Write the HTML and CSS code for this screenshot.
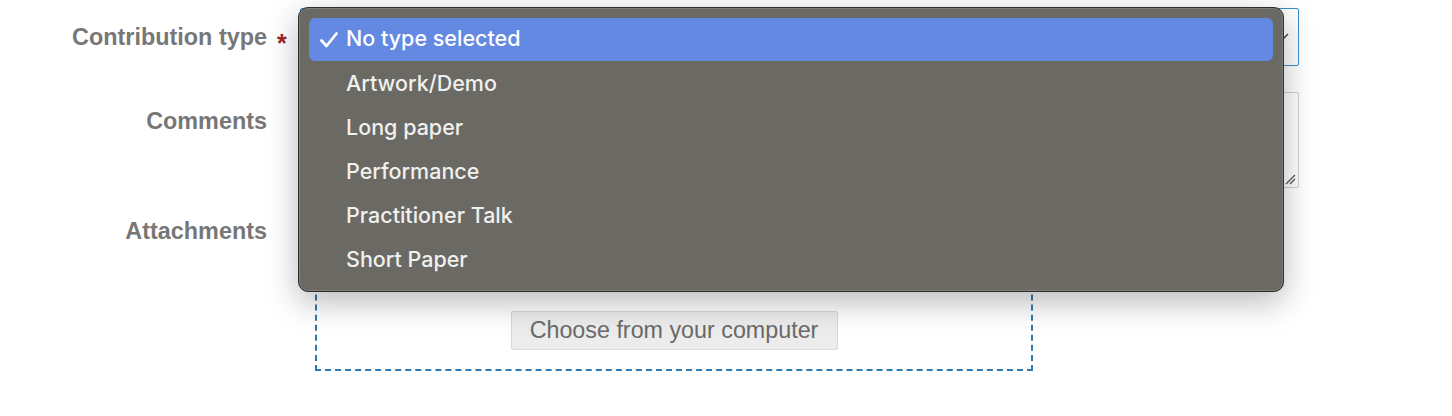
FILE: index.html
```html
<!DOCTYPE html>
<html lang="en">
<head>
<meta charset="utf-8">
<title>Contribution</title>
<link rel="stylesheet" href="styles.css">
</head>
<body>
<form class="form">
  <div class="label row1">Contribution type</div>
  <div class="mark row1">*</div>
  <div class="field">
    <div class="select">
      <span class="select-value"></span>
      <svg class="chevron" width="14" height="10" viewBox="0 0 14 10"><path d="M2 2 L7 7 L12 2" fill="none" stroke="#555" stroke-width="1.6"/></svg>
    </div>
  </div>

  <div class="label row2">Comments</div>
  <div class="mark"></div>
  <div class="field">
    <div class="textarea">
      <svg class="grip" width="12" height="12" viewBox="0 0 12 12"><path d="M11 2 L2 11 M11 6 L6 11" stroke="#555" stroke-width="1.3"/></svg>
    </div>
  </div>

  <div class="label row3">Attachments</div>
  <div class="mark"></div>
  <div class="field">
    <div class="dropzone">
      <button type="button" class="choose">Choose from your computer</button>
    </div>
  </div>
</form>

<div class="menu">
  <div class="item selected">
    <svg class="check" width="20" height="16" viewBox="0 0 20 16"><path d="M2.5 8.5 L7.5 14 L17.5 1.5" fill="none" stroke="#fff" stroke-width="2.8" stroke-linecap="round" stroke-linejoin="round"/></svg>
    <span>No type selected</span>
  </div>
  <div class="item"><span>Artwork/Demo</span></div>
  <div class="item"><span>Long paper</span></div>
  <div class="item"><span>Performance</span></div>
  <div class="item"><span>Practitioner Talk</span></div>
  <div class="item"><span>Short Paper</span></div>
</div>
</body>
</html>
```
FILE: styles.css
```css
html, body {
  margin: 0;
  padding: 0;
  background: #ffffff;
}
body {
  width: 1452px;
  height: 416px;
  overflow: hidden;
  position: relative;
  font-family: "Liberation Sans", Arial, sans-serif;
}
.form {
  display: grid;
  grid-template-columns: 267px 33px 999px;
  row-gap: 26px;
  padding-top: 8px;
}
.label {
  text-align: right;
  font-weight: bold;
  font-size: 23.4px;
  line-height: 27px;
  color: #777777;
}
.row1 { padding-top: 16px; }
.row2 { padding-top: 16px; }
.row3 { padding-top: 4px; }
.mark {
  color: #a02424;
  font-weight: bold;
  font-size: 25px;
  line-height: 27px;
  padding-left: 10px;
}
.mark.row1 { padding-top: 22px; }
.select {
  height: 58px;
  box-sizing: border-box;
  border: 1px solid #3b8fca;
  border-radius: 2px;
  display: flex;
  align-items: center;
  justify-content: space-between;
  padding: 0 8px 0 14px;
  font-size: 20px;
  color: #555;
}
.chevron { display: block; }
.textarea {
  height: 96px;
  box-sizing: border-box;
  border: 1px solid #cfcfcf;
  border-radius: 2px;
  display: flex;
  align-items: flex-end;
  justify-content: flex-end;
  padding: 0 2px 2px 0;
}
.grip { display: block; }
.dropzone {
  margin-left: 15px;
  width: 718px;
  height: 157px;
  box-sizing: border-box;
  border: 2.5px dashed #2d7ab0;
  display: flex;
  align-items: flex-end;
  justify-content: center;
  padding-bottom: 19px;
}
.choose {
  width: 327px;
  height: 39px;
  background: #ececec;
  border: 1px solid #d9d9d9;
  border-radius: 2px;
  font-family: "Liberation Sans", Arial, sans-serif;
  font-size: 23.3px;
  color: #6a6a6a;
  padding: 0;
}
.menu {
  position: absolute;
  left: 298px;
  top: 7px;
  width: 986px;
  height: 285px;
  box-sizing: border-box;
  background: #6a6964;
  border: 1px solid #2e2e2c;
  border-radius: 10px;
  box-shadow: inset 0 0 0 1px rgba(255,255,255,0.14), 0 10px 32px rgba(0,0,0,0.28);
  padding: 10px 10px 0 10px;
  font-family: Inter, "Noto Sans", sans-serif;
  font-weight: 500;
  font-size: 21.5px;
  color: #f0f0ee;
}
.item {
  height: 44px;
  box-sizing: border-box;
  display: flex;
  align-items: center;
  padding-left: 37px;
  padding-bottom: 3px;
  position: relative;
  border-radius: 6px;
}
.item.selected {
  background: #6489e2;
  height: 43px;
  margin-bottom: 1px;
  color: #ffffff;
}
.check {
  position: absolute;
  left: 10px;
  top: 14px;
}
```
